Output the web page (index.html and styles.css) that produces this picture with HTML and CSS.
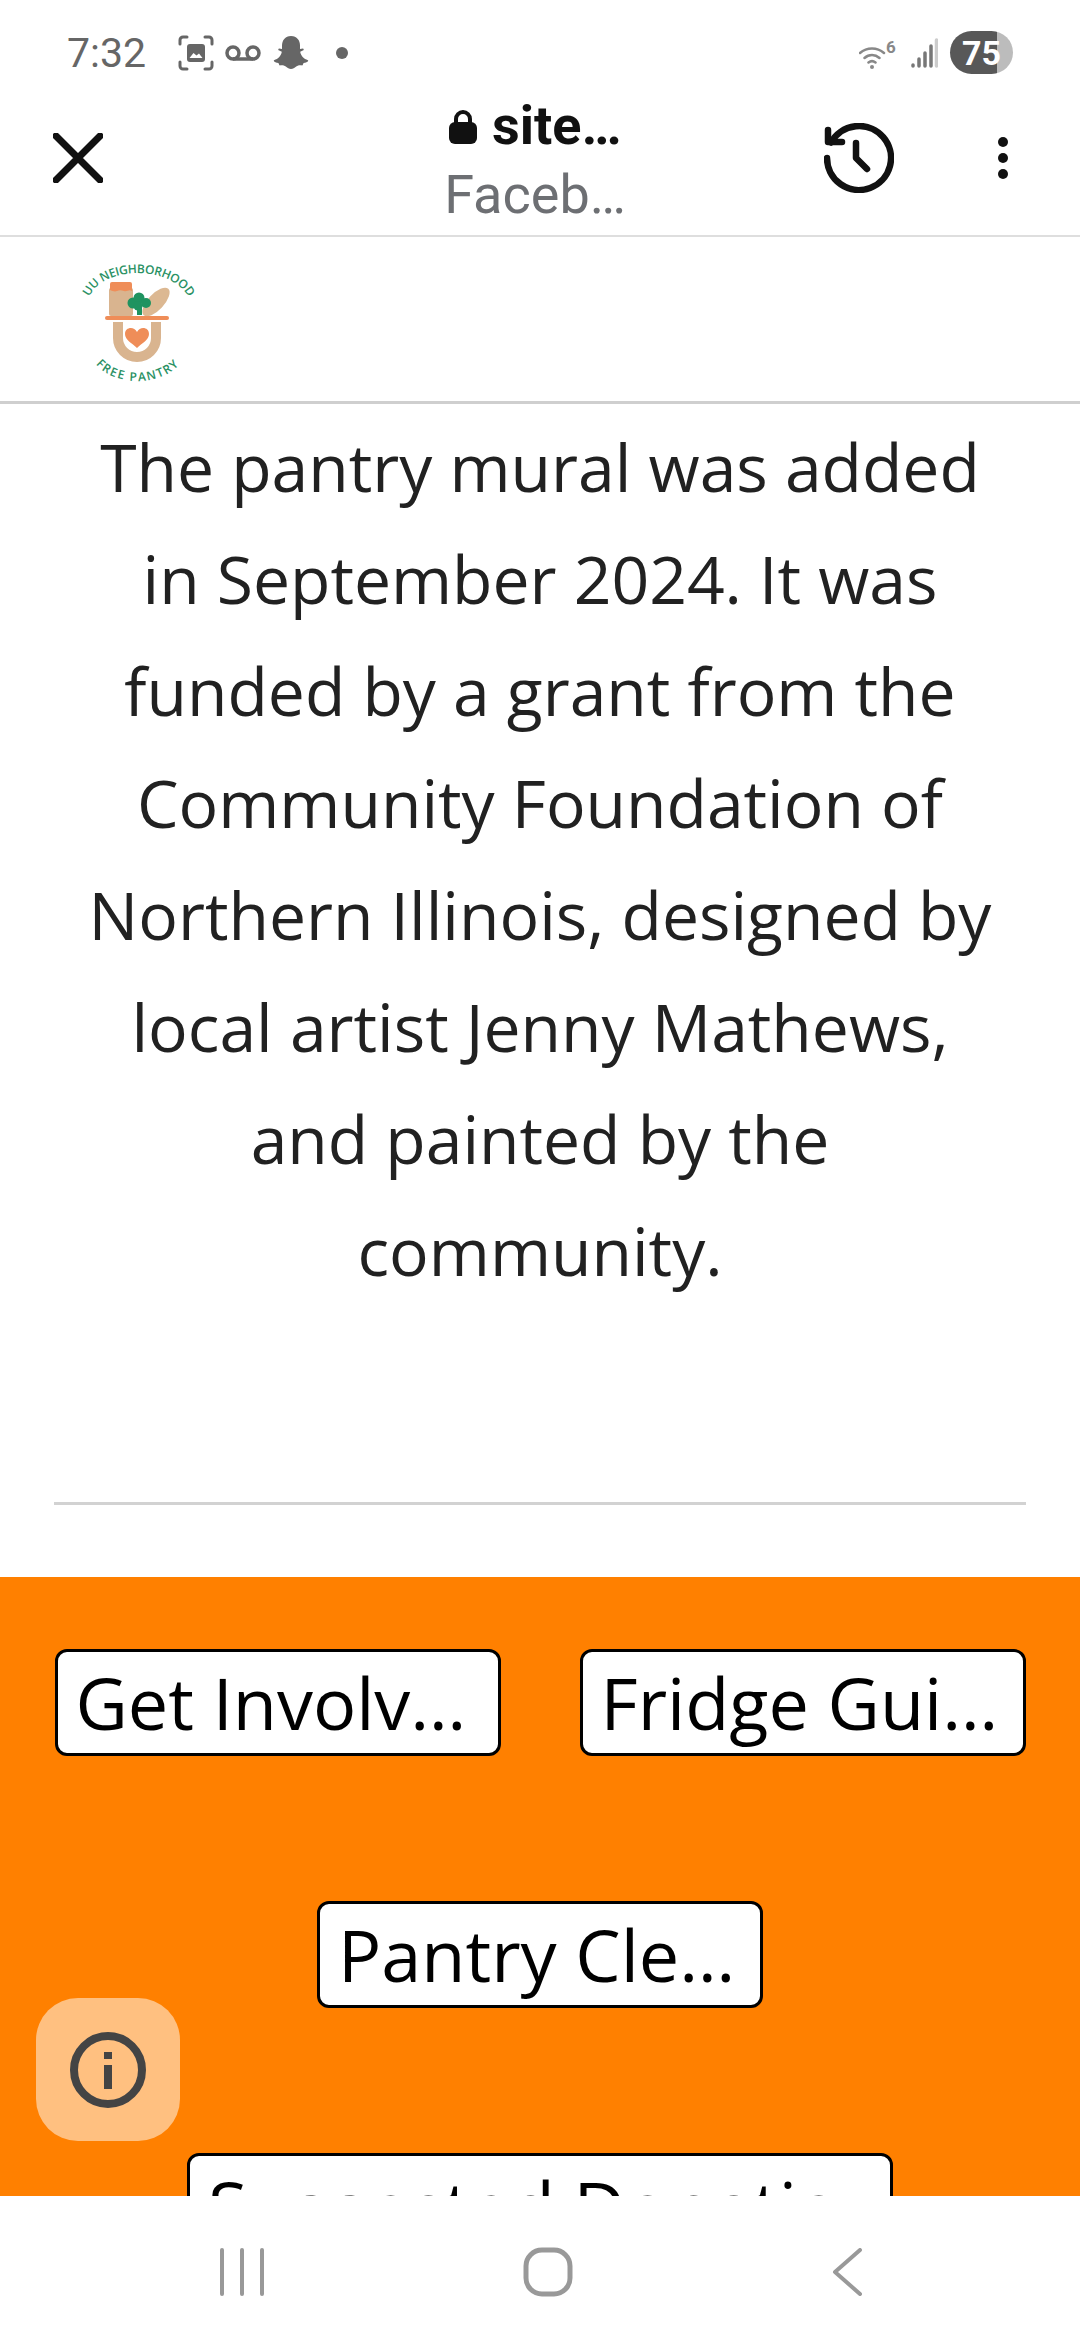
FILE: index.html
```html
<!DOCTYPE html>
<html lang="en">

<head>
	<meta charset="UTF-8">
	<title>UU Neighborhood Free Pantry</title>
	<link rel="stylesheet" href="styles.css">
</head>

<body>
	<div class="screen">
		<div class="status-bar">
			<span class="time">7:32</span>
			<svg class="ic-shot" viewBox="0 0 36 36" width="36" height="36" fill="none" stroke="#666" stroke-width="3" stroke-linecap="round">
				<path d="M2 9V5a3 3 0 0 1 3-3h4M27 2h4a3 3 0 0 1 3 3v4M34 27v4a3 3 0 0 1-3 3h-4M9 34H5a3 3 0 0 1-3-3v-4" />
				<rect x="9" y="9" width="18" height="18" rx="3" fill="#666" stroke="none" />
				<path d="M11.500 23l4-5 3 2.500 2.500-2 3.500 4.500z" fill="#fff" stroke="none" />
			</svg>
			<svg class="ic-voicemail" viewBox="0 0 36 18" width="36" height="18" fill="none" stroke="#666" stroke-width="3.500">
				<circle cx="8" cy="9" r="6" />
				<circle cx="28" cy="9" r="6" />
				<path d="M8 15h20" />
			</svg>
			<svg class="ic-snap" viewBox="0 0 36 36" width="36" height="36" fill="#666">
				<path d="M18 1c6 0 9 4.500 9 9.500V14l3-.6c1 .4 1 1.600-.2 2.200l-2.600 1.200c.6 4 3.500 7.200 7.800 8.400.6.800-.4 2-4.400 2.800-.6 1.200-.6 2.200-1.400 2.400-2.200-.4-4.200-.2-6 1.200-1.800 1.400-3.200 2.400-5.200 2.400s-3.400-1-5.200-2.400c-1.800-1.400-3.800-1.600-6-1.200-.8-.2-.8-1.200-1.400-2.400-4-.8-5-2-4.400-2.800 4.300-1.200 7.200-4.400 7.800-8.400l-2.600-1.200C5 15 5 13.800 6 13.400l3 .6v-3.500C9 5.500 12 1 18 1z" />
			</svg>
			<span class="status-dot"></span>
			<div class="status-right">
				<svg class="ic-wifi" viewBox="0 -6 38 34" width="38" height="34" fill="none" stroke="#888" stroke-width="2.500" stroke-linecap="round">
					<path d="M1 11c7-6 17-6 24 0M5.500 16c4.500-4 10.500-4 15 0M9.500 20.500c2.500-2 4.500-2 7 0" />
					<circle cx="13" cy="25" r="2" fill="#888" stroke="none" />
					<text x="27" y="11" class="wifi-six" stroke="none">6</text>
				</svg>
				<svg class="ic-signal" viewBox="0 0 27 30" width="27" height="30" stroke-width="3.500" stroke-linecap="round">
					<path d="M2 27v1M8 21v7M14 15v13M20 8v20" stroke="#777" />
					<path d="M25.500 2v26" stroke="#ccc" />
				</svg>
				<div class="battery"><span>75</span></div>
			</div>
		</div>

		<div class="toolbar">
			<svg class="ic-close" viewBox="0 0 50 50" width="50" height="50" stroke="#111" stroke-width="7" stroke-linecap="round">
				<path d="M3 3l44 44M47 3L3 47" />
			</svg>
			<div class="title">
				<div class="title-site">
					<svg class="ic-lock" viewBox="0 0 28 34" width="28" height="34">
						<path d="M7 15V9a7 7 0 0 1 14 0v6" fill="none" stroke="#111" stroke-width="4" />
						<rect y="12" width="28" height="22" rx="6" fill="#111" />
					</svg>
					site…
				</div>
				<div class="title-sub">Faceb…</div>
			</div>
			<svg class="ic-history" viewBox="0 0 70 70" width="70" height="70" fill="none" stroke="#111" stroke-width="6.500" stroke-linecap="round" stroke-linejoin="round">
				<path d="M7 19.500A32 32 0 1 1 3 35" />
				<path d="M4 7v12h14" />
				<path d="M32 20v15l11 11" />
			</svg>
			<div class="menu-dots"><i></i><i></i><i></i></div>
		</div>

		<div class="site-header">
			<svg class="logo" viewBox="0 0 170 160" width="170" height="160">
				<defs>
					<path id="arc-top" d="M38 60C50 24 124 24 140 60" />
					<path id="arc-bottom" d="M43 120C60 148 114 148 133 120" />
				</defs>
				<text class="logo-text logo-top"><textPath href="#arc-top" startOffset="50%" text-anchor="middle">UU NEIGHBORHOOD</textPath></text>
				<text class="logo-text logo-spaced"><textPath href="#arc-bottom" startOffset="50%" text-anchor="middle">FREE PANTRY</textPath></text>
				<rect x="59" y="48" width="24" height="28" rx="2" fill="#d9b48f" />
				<path d="M60 44a2 2 0 0 1 2-2h18a2 2 0 0 1 2 2v7c-3-2-5 1-8 0s-5-1-7 0-5 0-7-1z" fill="#ef8d58" />
				<ellipse cx="106" cy="62" rx="18" ry="8" transform="rotate(-47 106 62)" fill="#dcb892" />
				<circle cx="83" cy="63" r="5.500" fill="#1f9360" />
				<circle cx="89" cy="58" r="5.500" fill="#1f9360" />
				<circle cx="96" cy="63" r="5" fill="#1f9360" />
				<circle cx="88" cy="66" r="4.500" fill="#1f9360" />
				<rect x="87" y="66" width="5" height="9" fill="#1f9360" />
				<rect x="55" y="76" width="64" height="4" rx="2" fill="#ef8d58" />
				<path d="M68 82V98a19 19 0 0 0 38 0V82" fill="none" stroke="#d9b48f" stroke-width="10" />
				<path d="M87 108c-5-5-12-8-12-14 0-7 9-8 12-2 3-6 12-5 12 2 0 6-7 9-12 14z" fill="#ef8d58" />
			</svg>
		</div>

		<div class="content">
			<p class="intro">The pantry mural was added<br>in September 2024. It was<br>funded by a grant from the<br>Community Foundation of<br>Northern Illinois, designed by<br>local artist Jenny Mathews,<br>and painted by the<br>community.</p>
			<hr class="rule">
			<div class="links">
				<a class="link-btn">Get Involv…</a>
				<a class="link-btn">Fridge Gui…</a>
				<a class="link-btn">Pantry Cle…</a>
				<a class="link-btn link-wide">Suggested Donatio…</a>
			</div>
			<div class="info-btn">
				<svg viewBox="0 0 84 84" width="84" height="84" fill="none" stroke="#444" stroke-width="8">
					<circle cx="42" cy="42" r="34" />
					<path d="M42 24v7M42 37v24" />
				</svg>
			</div>
		</div>

		<div class="nav-bar">
			<svg viewBox="0 0 44 48" width="44" height="48" stroke="#999" stroke-width="4" stroke-linecap="round">
				<path d="M2 2v44M22 2v44M42 2v44" />
			</svg>
			<svg viewBox="0 0 50 50" width="50" height="50" fill="none" stroke="#999" stroke-width="5">
				<rect x="3" y="3" width="44" height="44" rx="16" />
			</svg>
			<svg viewBox="0 0 30 48" width="30" height="48" fill="none" stroke="#999" stroke-width="4" stroke-linecap="round" stroke-linejoin="round">
				<path d="M28 2L3 24l25 22" />
			</svg>
		</div>
	</div>
</body>

</html>
```

FILE: styles.css
```css
:root {
	--orange: #ff8000;
	--status: #666666;
	--text: #212121;
	--line: #d2d2d2;
}

* {
	box-sizing: border-box;
}

body {
	margin: 0;
	padding: 0;
	background: white;
	font-family: 'Open Sans', sans-serif;
}

.screen {
	display: flex;
	flex-direction: column;
	width: 1080px;
	height: 2340px;
	overflow: hidden;
}

/* Status bar */
.status-bar {
	display: flex;
	align-items: center;
	flex: none;
	height: 75px;
	padding: 30px 67px 0 67px;
	color: var(--status);
}

.time {
	margin-right: 32px;
	font-family: 'Roboto', sans-serif;
	font-size: 41px;
}

.ic-voicemail {
	margin-left: 11px;
}

.ic-snap {
	margin-left: 12px;
}

.status-dot {
	width: 12px;
	height: 12px;
	margin-left: 27px;
	border-radius: 50%;
	background: var(--status);
}

.status-right {
	display: flex;
	align-items: center;
	margin-left: auto;
}

.wifi-six {
	font-family: 'Roboto', sans-serif;
	font-size: 17px;
	font-weight: 700;
	fill: #888;
}

.ic-signal {
	margin-left: 14px;
}

.battery {
	display: flex;
	align-items: center;
	justify-content: center;
	width: 63px;
	height: 43px;
	margin-left: 12px;
	border-radius: 22px;
	background: linear-gradient(90deg, #585858 74%, #bcbcbc 74%);
	color: white;
	font-family: 'Roboto', sans-serif;
	font-size: 34px;
	font-weight: 700;
}

/* Custom tab toolbar */
.toolbar {
	display: flex;
	align-items: center;
	flex: none;
	height: 162px;
	padding: 5px 0 0 53px;
	border-bottom: 2px solid #dedede;
}

.title {
	width: 300px;
	margin-left: 282px;
	padding-top: 14px;
	text-align: center;
}

.title-site {
	color: #111;
	font-family: 'Roboto', sans-serif;
	font-size: 54px;
	font-weight: 700;
	line-height: 60px;
}

.ic-lock {
	margin-right: 2px;
}

.title-sub {
	color: #6d6f73;
	font-family: 'Roboto', sans-serif;
	font-size: 54px;
	line-height: 78px;
}

.ic-history {
	margin-left: 139px;
}

.menu-dots {
	display: flex;
	flex-direction: column;
	gap: 6px;
	margin-left: 104px;
}

.menu-dots i {
	width: 10px;
	height: 10px;
	border-radius: 50%;
	background: #111;
}

/* Site header */
.site-header {
	flex: none;
	height: 167px;
	padding: 3px 0 0 50px;
	border-bottom: 3px solid #cfcfcf;
}

.logo {
	display: block;
}

.logo-text {
	fill: #2a9164;
	font-family: 'Open Sans', sans-serif;
	font-size: 12px;
}

.logo-top {
	font-weight: 600;
	letter-spacing: -.3px;
}

.logo-spaced {
	font-weight: 600;
	letter-spacing: 1.500px;
}

/* Page content */
.content {
	position: relative;
	flex: 1;
	overflow: hidden;
}

.intro {
	margin: 0;
	padding: 6px 0 0;
	color: var(--text);
	font-size: 66px;
	line-height: 112px;
	text-align: center;
}

.rule {
	height: 3px;
	margin: 196px 54px 0;
	border: 0;
	background: var(--line);
}

.links {
	display: flex;
	flex-wrap: wrap;
	justify-content: center;
	gap: 145px 79px;
	margin-top: 72px;
	padding: 72px 54px 0;
	background: var(--orange);
	min-height: 800px;
	align-content: flex-start;
}

.link-btn {
	display: block;
	width: 446px;
	height: 107px;
	padding: 0 18px;
	border: 3px solid black;
	border-radius: 12px;
	background: white;
	color: black;
	font-size: 72px;
	line-height: 100px;
	white-space: nowrap;
	overflow: hidden;
}

.link-wide {
	width: 706px;
}

.info-btn {
	position: absolute;
	left: 36px;
	bottom: 55px;
	display: flex;
	align-items: center;
	justify-content: center;
	width: 144px;
	height: 143px;
	border-radius: 42px;
	background: #ffc080;
}

/* Navigation bar */
.nav-bar {
	display: flex;
	align-items: center;
	flex: none;
	height: 144px;
	padding: 8px 218px 0 220px;
	justify-content: space-between;
	background: white;
}
```
